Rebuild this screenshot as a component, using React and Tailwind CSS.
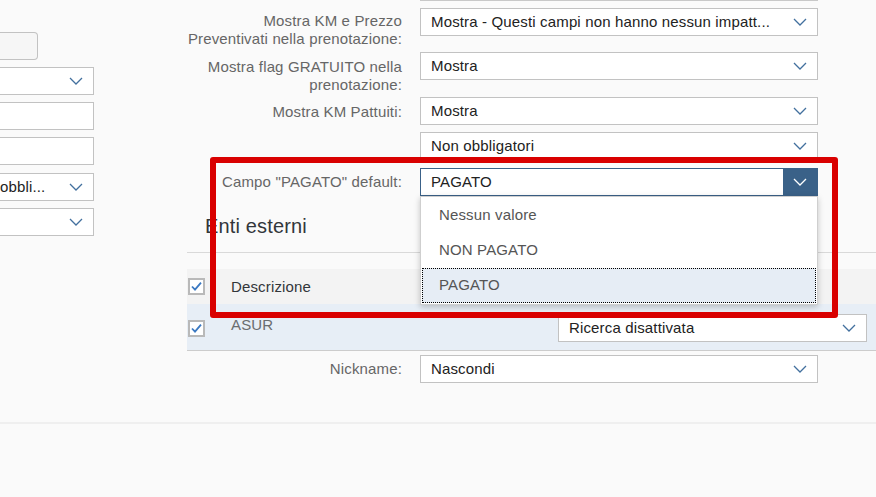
import React from "react";

function Chevron({ color = "#42709e" }) {
  return (
    <svg width="14" height="8" viewBox="0 0 14 8" fill="none">
      <path d="M1 1l6 6 6-6" stroke={color} strokeWidth="1.3" />
    </svg>
  );
}

function Select({ value, className = "", focused = false }) {
  return (
    <div
      className={`flex h-[28px] items-center bg-white border ${
        focused ? "border-[#3a6188]" : "border-[#c2c2c2]"
      } ${className}`}
    >
      <span className="flex-1 whitespace-nowrap pl-[10px] text-[15px] leading-[18px] text-[#222]">{value}</span>
      <span
        className={`flex h-full w-[34px] shrink-0 items-center justify-center ${focused ? "bg-[#3a6188]" : ""}`}
      >
        <Chevron color={focused ? "#ffffff" : "#42709e"} />
      </span>
    </div>
  );
}

function Checkbox() {
  return (
    <div className="flex h-[17px] w-[17px] items-center justify-center border-2 border-[#b9b9b9] bg-white">
      <svg width="13" height="13" viewBox="0 0 13 13" fill="none">
        <path d="M2 6.5l3 3.2 6-7" stroke="#3b79c2" strokeWidth="1.8" />
      </svg>
    </div>
  );
}

function FormRow({ label, children, mt, pt }) {
  return (
    <div className={`flex items-start ${mt}`}>
      <div className={`w-[215px] text-right text-[15px] leading-[18px] text-[#666] ${pt}`}>{label}</div>
      <div className="ml-[18px] w-[398px]">{children}</div>
    </div>
  );
}

export default function App() {
  return (
    <div className="relative h-[497px] w-[876px] overflow-hidden bg-[#fafafa] font-['Liberation_Sans',Arial,sans-serif] tracking-[0.15px]">
      <div className="flex h-[424px] border-b-2 border-[#efefef]">
        {/* left column, cut off by the viewport */}
        <div className="flex w-[94px] flex-col">
          <div className="mt-[32px] h-[28px] w-[38px] rounded-r-[4px] border border-l-0 border-[#c2c2c2] bg-[#f6f6f6]" />
          <div className="mt-[7px] flex h-[28px] items-center justify-end border border-l-0 border-[#c2c2c2] bg-white">
            <span className="flex w-[34px] justify-center"><Chevron /></span>
          </div>
          <div className="mt-[7px] h-[28px] border border-l-0 border-[#c2c2c2] bg-white" />
          <div className="mt-[7px] h-[28px] border border-l-0 border-[#c2c2c2] bg-white" />
          <div className="mt-[8px] flex h-[28px] items-center border border-l-0 border-[#c2c2c2] bg-white">
            <span className="flex-1 text-[15px] leading-[18px] text-[#222]">obbli...</span>
            <span className="flex w-[34px] justify-center"><Chevron /></span>
          </div>
          <div className="mt-[7px] flex h-[28px] items-center justify-end border border-l-0 border-[#c2c2c2] bg-white">
            <span className="flex w-[34px] justify-center"><Chevron /></span>
          </div>
        </div>

        {/* main column */}
        <div className="ml-[93px] flex flex-1 flex-col">
          <div className="ml-[233px] h-px w-[398px] bg-[#c8c8c8]" />

          <FormRow
            mt="mt-[7px]"
            pt="pt-[4px]"
            label={<>Mostra KM e Prezzo<br />Preventivati nella prenotazione:</>}
          >
            <Select value="Mostra - Questi campi non hanno nessun impatt..." />
          </FormRow>

          <FormRow mt="mt-[4px]" pt="pt-[6px]" label={<>Mostra flag GRATUITO nella<br />prenotazione:</>}>
            <Select value="Mostra" />
          </FormRow>

          <FormRow mt="mt-[3px]" pt="pt-[6px]" label="Mostra KM Pattuiti:">
            <Select value="Mostra" />
          </FormRow>

          <FormRow mt="mt-[7px]" pt="" label="">
            <Select value="Non obbligatori" />
          </FormRow>

          <FormRow mt="mt-[8px]" pt="pt-[5px]" label={'Campo "PAGATO" default:'}>
            <Select value="PAGATO" focused />
          </FormRow>

          <div className="mt-[17px] border-b border-[#d9d9d9] pb-[13px]">
            <h2 className="ml-[18px] text-[20px] leading-[26px] text-[#32363a]">Enti esterni</h2>
          </div>

          {/* table */}
          <div className="mt-[16px] flex h-[35px] items-center bg-[#f3f3f3]">
            <div className="ml-px"><Checkbox /></div>
            <span className="ml-[26px] text-[15px] leading-[18px] text-[#32363a]">Descrizione</span>
          </div>
          <div className="flex h-[47px] items-start border-b border-[#cccccc] bg-[#e7eef6]">
            <div className="ml-px mt-[16px]"><Checkbox /></div>
            <span className="ml-[26px] mt-[12px] text-[15px] leading-[18px] text-[#6a6d70]">ASUR</span>
            <div className="ml-auto mr-[9px] mt-[10px] w-[309px]">
              <Select value="Ricerca disattivata" />
            </div>
          </div>

          <FormRow mt="mt-[4px]" pt="pt-[5px]" label="Nickname:">
            <Select value="Nascondi" />
          </FormRow>
        </div>
      </div>

      {/* open dropdown list */}
      <div className="absolute left-[420px] top-[196px] w-[398px] border border-[#cfcfcf] bg-white py-px shadow-[0_2px_6px_rgba(0,0,0,0.22)]">
        <div className="flex h-[35px] items-center pl-[18px] text-[15px] text-[#555]">Nessun valore</div>
        <div className="flex h-[35px] items-center pl-[18px] text-[15px] text-[#555]">NON PAGATO</div>
        <div className="mx-px flex h-[35px] items-center border border-dotted border-black bg-[#e6edf5] pl-[16px] text-[15px] text-[#555]">
          PAGATO
        </div>
      </div>

      {/* red annotation frame */}
      <div className="pointer-events-none absolute left-[210px] top-[157px] h-[161px] w-[628px] rounded-[3px] border-[6px] border-[#d90000]" />
    </div>
  );
}
